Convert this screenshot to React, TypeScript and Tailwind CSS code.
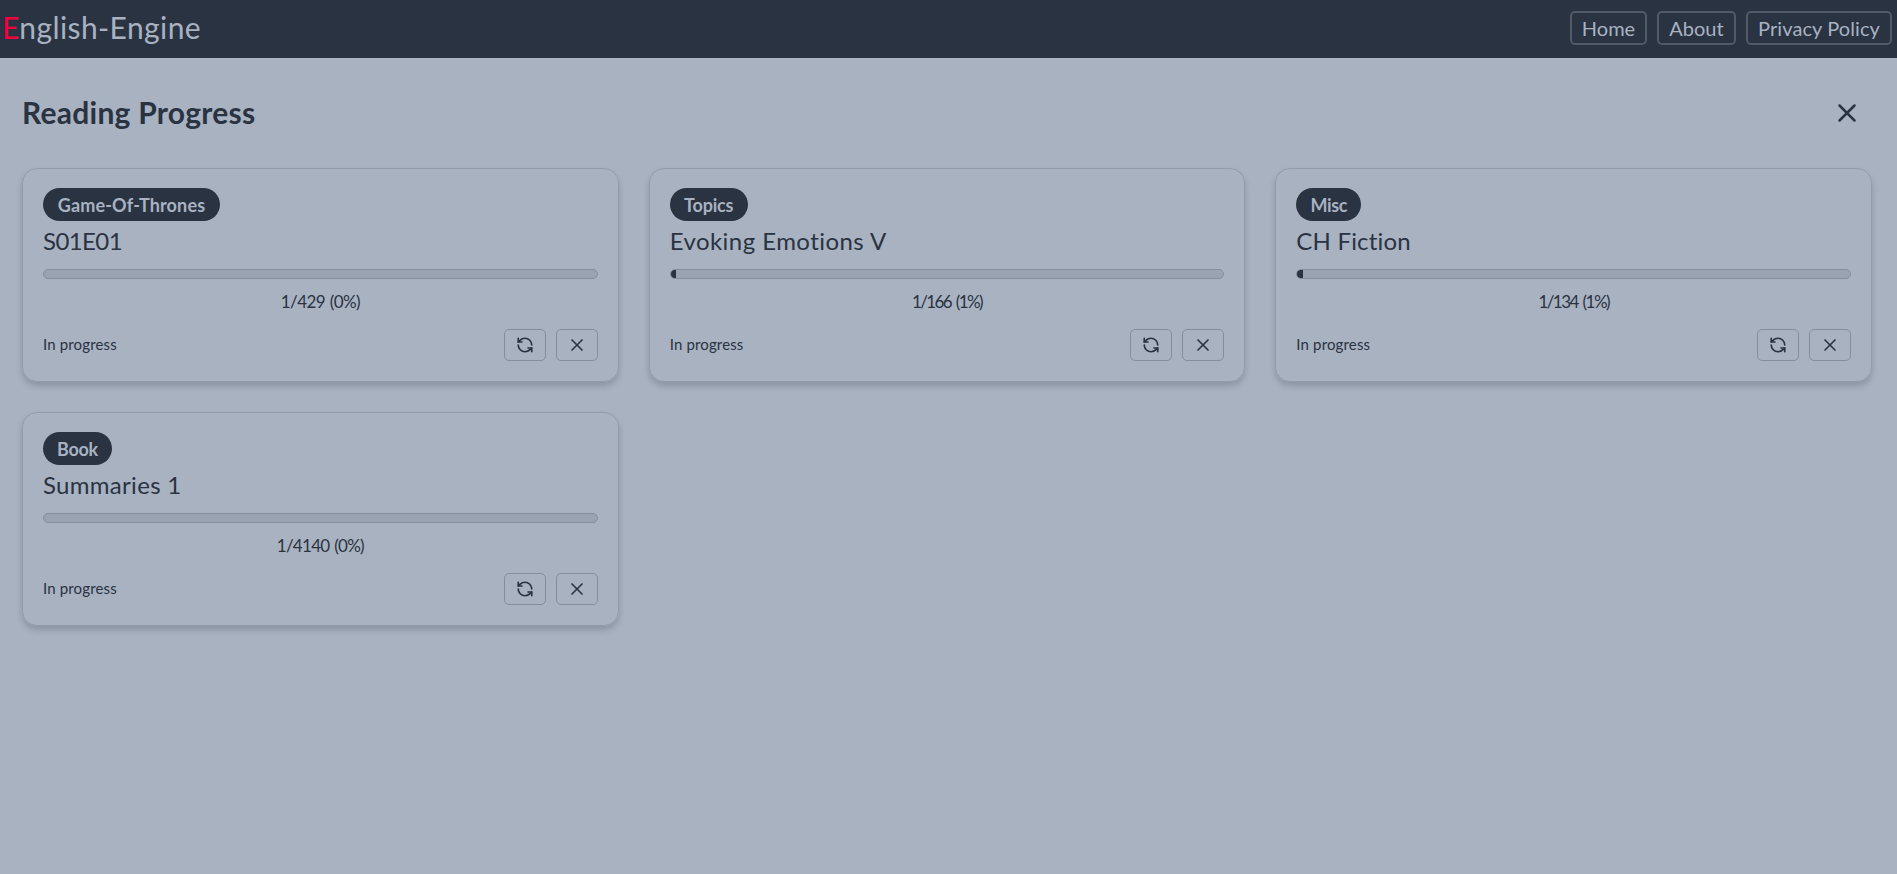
import React from 'react';
import { RefreshCcw, X } from 'lucide-react';

interface ReadingItem {
  category: string;
  title: string;
  current: number;
  total: number;
  categoryClass: string;
  titleClass: string;
  countClass: string;
}

const items: ReadingItem[] = [
  { category: 'Game-Of-Thrones', title: 'S01E01', current: 1, total: 429, categoryClass: 'w-[177px] tracking-[0.15px]', titleClass: 'tracking-[-0.6px]', countClass: 'tracking-[-0.6px] [word-spacing:1px]' },
  { category: 'Topics', title: 'Evoking Emotions V', current: 1, total: 166, categoryClass: 'w-[78px] tracking-[-0.2px]', titleClass: 'tracking-[0.45px]', countClass: 'tracking-[-1.6px] [word-spacing:2px]' },
  { category: 'Misc', title: 'CH Fiction', current: 1, total: 134, categoryClass: 'w-[65px] tracking-[-0.3px]', titleClass: 'tracking-[0.2px]', countClass: 'tracking-[-1.55px] [word-spacing:2px]' },
  { category: 'Book', title: 'Summaries 1', current: 1, total: 4140, categoryClass: 'w-[69px] tracking-[-0.3px]', titleClass: 'tracking-[0.3px]', countClass: 'tracking-[-0.7px] [word-spacing:1px]' },
];

const navLinks = [
  { label: 'Home', className: 'w-[77px]' },
  { label: 'About', className: 'w-[79px]' },
  { label: 'Privacy Policy', className: 'w-[146px] tracking-[0.1px]' },
];

const Header = () => (
  <header className="flex h-[58px] items-center justify-between bg-[#2a3342] pl-[2px] pr-[5px] text-[#a8b2c1]">
    <a href="#" className="text-[30px] leading-none tracking-[0.4px] whitespace-nowrap pb-[5px]">
      <span className="text-[#f5003d]">E</span>nglish-Engine
    </a>
    <nav className="flex gap-[10px] pb-0.5">
      {navLinks.map((link) => (
        <a
          key={link.label}
          href="#"
          className={`flex h-[34px] items-center justify-center rounded-[5px] border-2 border-[#515a69] pb-px text-[20px] whitespace-nowrap ${link.className}`}
        >
          {link.label}
        </a>
      ))}
    </nav>
  </header>
);

const ProgressCard = ({ item }: { item: ReadingItem }) => {
  const percent = Math.round((item.current / item.total) * 100);

  return (
    <article className="flex h-[214px] flex-col items-start rounded-[15px] border border-[#929baa] px-5 pt-[19px] shadow-[0_4px_6px_rgba(0,0,0,0.17)]">
      <span className={`flex h-[33px] items-center justify-center rounded-full bg-[#2a3342] pt-px text-[18px] font-bold whitespace-nowrap text-[#a8b2c1] ${item.categoryClass}`}>
        {item.category}
      </span>
      <h2 className={`mt-[5px] h-[30px] text-[24px] leading-[30px] ${item.titleClass}`}>{item.title}</h2>
      <div className="mt-[13px] h-[10px] w-full overflow-hidden rounded-[5px] border border-[#858e9d] bg-[#9aa3b2]">
        <div className="h-full bg-[#2a3342]" style={{ width: `${percent}%` }} />
      </div>
      <p className={`mt-[11px] w-full text-center text-[17px] leading-[23px] ${item.countClass}`}>
        {item.current}/{item.total} ({percent}%)
      </p>
      <div className="mt-4 flex w-full items-center justify-between">
        <span className="pb-px text-[15px] tracking-[0.15px]">In progress</span>
        <div className="flex gap-[10px]">
          <button className="flex h-8 w-[42px] items-center justify-center rounded-[5px] border border-[#858e9d]">
            <RefreshCcw size={18} strokeWidth={2.2} />
          </button>
          <button className="flex h-8 w-[42px] items-center justify-center rounded-[5px] border border-[#858e9d]">
            <X size={20} />
          </button>
        </div>
      </div>
    </article>
  );
};

const App = () => {
  return (
    <div className="min-h-screen bg-[#a8b2c1] font-['Lato',sans-serif] text-[#2a3342]">
      <Header />
      <main className="pl-[22px] pr-[25px]">
        <div className="flex h-[110px] items-center justify-between pr-[10px]">
          <h1 className="pb-0.5 text-[30px] leading-none font-bold tracking-[0.25px]">Reading Progress</h1>
          <button>
            <X size={30} />
          </button>
        </div>
        <div className="grid grid-cols-3 gap-[30px]">
          {items.map((item) => (
            <ProgressCard key={item.title} item={item} />
          ))}
        </div>
      </main>
    </div>
  );
};

export default App;
